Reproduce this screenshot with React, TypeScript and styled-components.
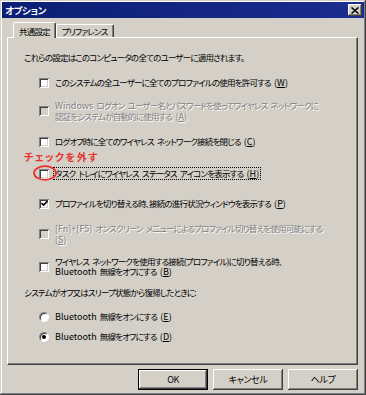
import { createGlobalStyle, styled } from 'styled-components'

const FONT = `"Noto Sans CJK JP", "Noto Sans", sans-serif`

const GlobalStyle = createGlobalStyle`
  html, body {
    margin: 0;
    padding: 0;
    background: #d4d0c8;
  }
`

const Window = styled.div`
  width: 366px;
  height: 395px;
  box-sizing: border-box;
  padding: 2px;
  display: flex;
  flex-direction: column;
  background: #d4d0c8;
  box-shadow: inset -1px -1px #404040, inset 1px 1px #d4d0c8,
    inset -2px -2px #808080, inset 2px 2px #ffffff;
  font-family: ${FONT};
  font-size: 8.5px;
  letter-spacing: -0.8px;
  word-spacing: 2px;
  line-height: 10px;
  color: #000;
  font-feature-settings: 'palt';
`

const TitleBar = styled.div`
  height: 16px;
  display: flex;
  align-items: center;
  justify-content: space-between;
  padding: 0 2px 0 3px;
  background: linear-gradient(90deg, #0a1f73, #1c2c90);
  color: #fff;
  font-weight: bold;
  font-size: 9.5px;
  letter-spacing: -0.4px;
`

const CloseButton = styled.div`
  width: 14px;
  height: 12px;
  display: flex;
  align-items: center;
  justify-content: center;
  background: #d4d0c8;
  box-shadow: inset -1px -1px #404040, inset 1px 1px #ffffff,
    inset -2px -2px #808080;
`

const Body = styled.div`
  display: flex;
  flex-direction: column;
  padding: 4px 6px 0 5px;
`

const TabStrip = styled.div`
  display: flex;
  align-items: flex-end;
  height: 15px;
  padding-left: 6px;
`

const Tab = styled.div<{ $active?: boolean }>`
  position: relative;
  z-index: ${(p) => (p.$active ? 1 : 0)};
  height: ${(p) => (p.$active ? '16px' : '13px')};
  margin-bottom: ${(p) => (p.$active ? '-1px' : '0')};
  padding: 0 5px;
  display: flex;
  align-items: center;
  box-sizing: border-box;
  background: #d4d0c8;
  border-top: 1px solid #fff;
  border-left: 1px solid #fff;
  border-right: 1px solid #404040;
  border-top-left-radius: 2px;
  border-top-right-radius: 2px;
  box-shadow: inset -1px 0 #808080;
`

const Panel = styled.div`
  height: 328px;
  box-sizing: border-box;
  padding: 14px 0 0 16px;
  border-top: 1px solid #fff;
  border-left: 1px solid #fff;
  border-right: 1px solid #404040;
  border-bottom: 1px solid #404040;
  box-shadow: inset -1px -1px #808080;
  display: flex;
  flex-direction: column;
`

const Text = styled.div<{ $mt?: number }>`
  margin-top: ${(p) => p.$mt ?? 0}px;
  white-space: nowrap;
`

const Latin = styled.span`
  letter-spacing: 0;
  font-size: 9px;
`

const OptionRow = styled.div<{ $mt: number }>`
  position: relative;
  display: flex;
  align-items: center;
  gap: 4px;
  min-height: 13px;
  margin-top: ${(p) => p.$mt}px;
  margin-left: 15px;
`

const Box = styled.span<{ $disabled?: boolean }>`
  flex: none;
  width: 10px;
  height: 10px;
  box-sizing: border-box;
  display: flex;
  align-items: center;
  justify-content: center;
  background: ${(p) => (p.$disabled ? '#d4d0c8' : '#fff')};
  box-shadow: inset 1px 1px #808080, inset -1px -1px #ffffff,
    inset 2px 2px #404040, inset -2px -2px #d4d0c8;
`

const Radio = styled.span`
  flex: none;
  width: 10px;
  height: 10px;
  box-sizing: border-box;
  border-radius: 50%;
  border: 1px solid;
  border-color: #808080 #ffffff #ffffff #808080;
  background: #fff;
  box-shadow: inset 1px 1px #404040;
  display: flex;
  align-items: center;
  justify-content: center;
`

const Dot = styled.span`
  width: 4px;
  height: 4px;
  border-radius: 50%;
  background: #000;
`

const Label = styled.span<{ $disabled?: boolean; $focused?: boolean }>`
  white-space: nowrap;
  color: ${(p) => (p.$disabled ? '#808080' : '#000')};
  text-shadow: ${(p) => (p.$disabled ? '1px 1px 0 #ffffff' : 'none')};
  padding: 0 1px;
  border: 1px dotted ${(p) => (p.$focused ? '#000' : 'transparent')};
`

const Note = styled.div`
  position: absolute;
  left: -15px;
  top: -15px;
  color: #e8302a;
  font-size: 10px;
  font-weight: bold;
  letter-spacing: 1.5px;
  white-space: nowrap;
`

const Ring = styled.svg`
  position: absolute;
  left: -6px;
  top: -2px;
`

const ButtonRow = styled.div`
  display: flex;
  justify-content: flex-end;
  gap: 5px;
  margin-top: 4px;
`

const Button = styled.div<{ $default?: boolean }>`
  width: 70px;
  height: 21px;
  box-sizing: border-box;
  display: flex;
  align-items: center;
  justify-content: center;
  background: #d4d0c8;
  letter-spacing: -0.4px;
  font-size: 9px;
  border: ${(p) => (p.$default ? '1px solid #000' : 'none')};
  box-shadow: inset -1px -1px #404040, inset 1px 1px #ffffff,
    inset -2px -2px #808080, inset 2px 2px #d4d0c8;
`

function Check() {
  return (
    <svg width="7" height="7" viewBox="0 0 7 7">
      <polyline points="0.5,3 2.5,5 6.5,1" fill="none" stroke="#000" strokeWidth="1.6" />
    </svg>
  )
}

export default function App() {
  return (
    <>
      <GlobalStyle />
      <Window>
        <TitleBar>
          <span>オプション</span>
          <CloseButton>
            <svg width="8" height="7" viewBox="0 0 8 7">
              <path d="M0.5 0.5 L7.5 6.5 M7.5 0.5 L0.5 6.5" stroke="#000" strokeWidth="1.5" />
            </svg>
          </CloseButton>
        </TitleBar>
        <Body>
          <TabStrip>
            <Tab $active>共通設定</Tab>
            <Tab>プリファレンス</Tab>
          </TabStrip>
          <Panel>
            <Text>これらの設定はこのコンピュータの全てのユーザーに適用されます。</Text>

            <OptionRow $mt={14}>
              <Box />
              <Label>
                このシステムの全ユーザーに全てのプロファイルの使用を許可する <Latin>(<u>W</u>)</Latin>
              </Label>
            </OptionRow>

            <OptionRow $mt={10}>
              <Box $disabled />
              <Label $disabled>
                <Latin>Windows</Latin> ログオン ユーザー名とパスワードを使ってワイヤレス ネットワークに
                <br />
                認証をシステムが自動的に使用する <Latin>(<u>A</u>)</Latin>
              </Label>
            </OptionRow>

            <OptionRow $mt={12}>
              <Box />
              <Label>
                ログオフ時に全てのワイヤレス ネットワーク接続を閉じる <Latin>(<u>C</u>)</Latin>
              </Label>
            </OptionRow>

            <OptionRow $mt={19}>
              <Note>チェックを外す</Note>
              <Box />
              <Label $focused>
                タスク トレイにワイヤレス ステータス アイコンを表示する <Latin>(<u>H</u>)</Latin>
              </Label>
              <Ring width="24" height="16" viewBox="0 0 24 16">
                <ellipse cx="12" cy="8" rx="11" ry="6.8" fill="none" stroke="#e8302a" strokeWidth="1.8" />
              </Ring>
            </OptionRow>

            <OptionRow $mt={17}>
              <Box>
                <Check />
              </Box>
              <Label>
                プロファイルを切り替える時、接続の進行状況ウィンドウを表示する <Latin>(<u>P</u>)</Latin>
              </Label>
            </OptionRow>

            <OptionRow $mt={12}>
              <Box $disabled />
              <Label $disabled>
                <Latin>[Fn]+[F5]</Latin> オンスクリーン メニューによるプロファイル切り替えを使用可能にする
                <br />
                <Latin>(<u>S</u>)</Latin>
              </Label>
            </OptionRow>

            <OptionRow $mt={9}>
              <Box />
              <Label>
                ワイヤレス ネットワークを使用する接続(プロファイル)に切り替える時、
                <br />
                <Latin>Bluetooth</Latin> 無線をオフにする <Latin>(<u>B</u>)</Latin>
              </Label>
            </OptionRow>

            <Text $mt={9}>システムがオフ又はスリープ状態から復帰したときに:</Text>

            <OptionRow $mt={13}>
              <Radio />
              <Label>
                <Latin>Bluetooth</Latin> 無線をオンにする <Latin>(<u>E</u>)</Latin>
              </Label>
            </OptionRow>

            <OptionRow $mt={7}>
              <Radio>
                <Dot />
              </Radio>
              <Label>
                <Latin>Bluetooth</Latin> 無線をオフにする <Latin>(<u>D</u>)</Latin>
              </Label>
            </OptionRow>
          </Panel>
          <ButtonRow>
            <Button $default>OK</Button>
            <Button>キャンセル</Button>
            <Button>ヘルプ</Button>
          </ButtonRow>
        </Body>
      </Window>
    </>
  )
}
